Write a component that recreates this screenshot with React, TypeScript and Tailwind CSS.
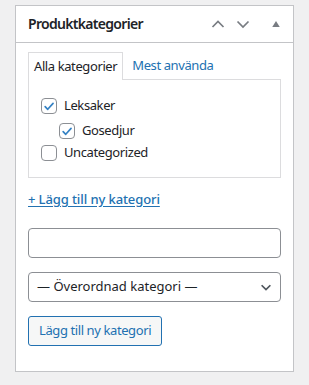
import React from 'react';

const CheckBox = ({ checked }: { checked?: boolean }) => (
  <span className="flex h-4 w-4 shrink-0 items-center justify-center rounded-[4px] border border-[#8c8f94] bg-white">
    {checked && (
      <svg viewBox="0 0 20 20" className="h-[15px] w-[15px]">
        <path d="M4.5 10.2 L8.2 14 L15.8 5.5" fill="none" stroke="#3582c4" strokeWidth="2.4" strokeLinecap="round" strokeLinejoin="round" />
      </svg>
    )}
  </span>
);

const Chevron = ({ up }: { up?: boolean }) => (
  <svg viewBox="0 0 16 16" className="h-[16px] w-[16px]">
    <path d={up ? 'M2.5 11 L8 5.5 L13.5 11' : 'M2.5 5.5 L8 11 L13.5 5.5'} fill="none" stroke="#787c82" strokeWidth="1.7" />
  </svg>
);

export default function App() {
  return (
    <div className="min-h-[385px] bg-[#f0f0f1] px-[15px] pt-[5px] text-[13px] tracking-[-0.4px] text-[#1d2327]" style={{ fontFamily: '"Noto Sans", "Open Sans", sans-serif' }}>
      <div className="h-[367px] border border-[#c3c4c7] bg-white">
        {/* header */}
        <div className="flex h-[37px] items-center border-b border-[#c3c4c7] pl-[12px] pr-[13px]">
          <h2 className="flex-1 text-[14px] font-semibold leading-none tracking-[-0.7px]">Produktkategorier</h2>
          <div className="flex items-center gap-[9px]">
            <Chevron up />
            <Chevron />
          </div>
          <svg viewBox="0 0 10 8" className="ml-[21px] h-[6px] w-[8px]">
            <path d="M5 0 L10 8 L0 8 Z" fill="#787c82" />
          </svg>
        </div>

        <div className="px-[12px] pt-[9px]">
          {/* tabs */}
          <div className="flex h-[27px] items-end">
            <div className="relative -mb-px flex h-[28px] items-center border border-b-0 border-[#dcdcde] bg-white px-[5px]">
              Alla kategorier
            </div>
            <div className="flex h-[27px] items-center px-[9px] text-[#2271b1]">Mest använda</div>
          </div>
          <div className="h-[99px] border border-[#dcdcde] pl-[12px] pt-[18px]">
            <label className="flex h-[16px] items-center gap-[7px]">
              <CheckBox checked />
              <span>Leksaker</span>
            </label>
            <label className="mt-[9px] ml-[18px] flex h-[16px] items-center gap-[7px]">
              <CheckBox checked />
              <span>Gosedjur</span>
            </label>
            <label className="mt-[6px] flex h-[16px] items-center gap-[7px]">
              <CheckBox />
              <span>Uncategorized</span>
            </label>
          </div>

          <a className="mt-[12px] block w-fit text-[13px] font-medium tracking-[-0.1px] text-[#2271b1] underline underline-offset-2">+ Lägg till ny kategori</a>

          <input type="text" className="mt-[18px] block h-[30px] w-full rounded-[4px] border border-[#8c8f94] bg-white px-2" />

          <div className="mt-[14px] flex h-[30px] items-center justify-between rounded-[4px] border border-[#8c8f94] bg-white pl-[8px] pr-[7px] tracking-[0px]">
            <span>— Överordnad kategori —</span>
            <svg viewBox="0 0 16 16" className="h-[14px] w-[14px]">
              <path d="M3 6 L8 11 L13 6" fill="none" stroke="#50575e" strokeWidth="2" />
            </svg>
          </div>

          <button className="mt-[14px] flex h-[30px] items-center rounded-[3px] border border-[#2271b1] bg-[#f6f7f7] px-[10px] text-[#2271b1]">
            Lägg till ny kategori
          </button>
        </div>
      </div>
    </div>
  );
}
